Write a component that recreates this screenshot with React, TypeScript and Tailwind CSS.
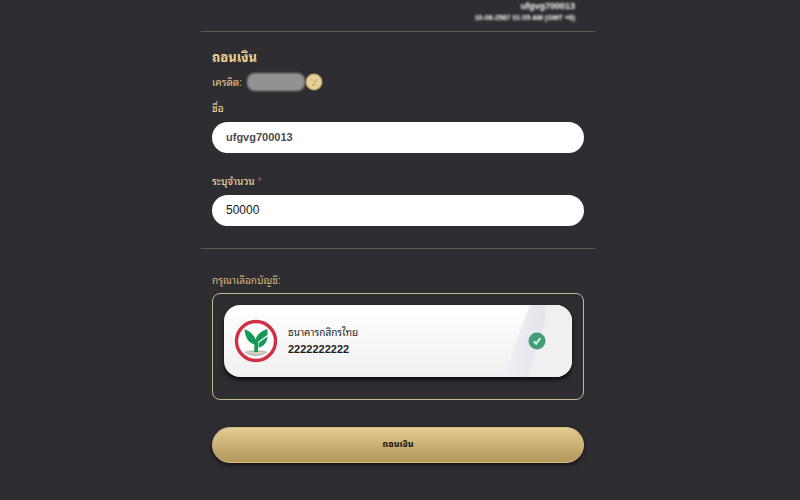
import React, { useState } from 'react';

const account = {
  bank: 'ธนาคารกสิกรไทย',
  number: '2222222222',
};

const BankLogo: React.FC = () => (
  <svg viewBox="0 0 44 44" className="h-11 w-11 shrink-0" aria-hidden="true">
    <circle cx="22" cy="22" r="19.5" fill="#fdfdfd" stroke="#cf3045" strokeWidth="3.4" />
    <path d="M10.500 33c3-1 7-1.400 11.500-1.400s8.500.4 11.500 1.400c-3 3-7 4-11.500 4S13.500 36 10.500 33z" fill="#bdb8b0" />
    <path d="M12.500 33.500h19M14.500 35.200h15" stroke="#e3dfd8" strokeWidth="0.700" />
    <path d="M20.300 33V25.500C14.500 23.500 11 18.500 10.500 10c5.500 2.500 9.500 5.500 11 10.500C23 15.500 27 12 33.500 10v5.800L24 23V33z" fill="#149a58" />
    <path d="M24.500 24l9-6.500c0 5-3 9.300-9 11.300z" fill="#149a58" />
  </svg>
);

const CheckBadge: React.FC = () => (
  <svg viewBox="0 0 18 18" className="h-[18px] w-[18px]" aria-hidden="true">
    <circle cx="9" cy="9" r="8.500" fill="#439d77" />
    <path d="M5.800 9.300l2.300 2.400 4.300-5.700" fill="none" stroke="#c9f7e0" strokeWidth="2" />
  </svg>
);

const Coin: React.FC = () => (
  <svg viewBox="0 0 18 18" className="h-[18px] w-[18px]" aria-hidden="true">
    <circle cx="9" cy="9" r="8.500" fill="#c3a76c" />
    <circle cx="9" cy="9" r="7" fill="#e6d29b" />
    <path d="M6 6.500l2 1M12.500 6L9 10M7 12l3.500-.5" stroke="#c4a766" strokeWidth="1.300" fill="none" />
  </svg>
);

const Field: React.FC<{
  id: string;
  label: string;
  value: string;
  required?: boolean;
  readOnly?: boolean;
  className: string;
  onChange?: (value: string) => void;
}> = ({ id, label, value, required, readOnly, className, onChange }) => (
  <div>
    <label htmlFor={id} className="block pb-[6px] text-[10px] leading-[14px] font-medium text-[#e9d6a4]">
      {label}
      {required && <span className="text-[#b05a50]"> *</span>}
    </label>
    <input
      id={id}
      value={value}
      readOnly={readOnly}
      onChange={(e) => onChange?.(e.target.value)}
      className={`block h-[31px] w-full rounded-full bg-white px-[14px] pb-px outline-none ${className}`}
    />
  </div>
);

const App: React.FC = () => {
  const [amount, setAmount] = useState('50000');

  return (
    <div className="min-h-screen bg-[#2d2d32] pr-1 pb-9 font-['Liberation_Sans','Noto_Sans_Thai_Looped','Loma','Noto_Sans_Thai',sans-serif]">
      <main className="mx-auto max-w-[394px]">
        {/* Masked user info */}
        <header className="flex h-8 flex-col items-end border-b border-[#605c4d] pr-5 text-white">
          <p className="text-[9px] leading-3 font-bold blur-[1px]">ufgvg700013</p>
          <p className="text-[7px] leading-3 font-bold blur-[1px]">10-06-2567 01:05 AM (GMT +6)</p>
        </header>

        <section className="border-b border-[#605c4d] px-[11px] pt-4 pb-[22px]">
          <h1 className="text-[13px] leading-5 font-bold text-[#f0d291]">ถอนเงิน</h1>
          <div className="mt-[3px] flex h-[22px] items-center">
            <span className="w-[35px] text-[10px] text-[#e6cc8b]">เครดิต:</span>
            <span className="h-[18px] w-[58px] rounded-lg bg-[#929294] blur-[1px]" />
            <Coin />
          </div>

          <form className="mt-[9px] flex flex-col gap-[22px]">
            <Field id="name" label="ชื่อ" value="ufgvg700013" readOnly className="text-[11px] font-bold text-[#4b4b4e]" />
            <Field id="amount" label="ระบุจำนวน" value={amount} required onChange={setAmount} className="text-xs text-[#161616]" />
          </form>
        </section>

        <section className="px-[11px] pt-[25px]">
          <h2 className="text-[10px] leading-[14px] text-[#d9b878]">กรุณาเลือกบัญชี:</h2>
          <div className="mt-[5px] rounded-lg border border-[#c4b88e] px-[11px] pt-[11px] pb-[22px]">
            <label className="relative flex h-[72px] items-center gap-[10px] overflow-hidden rounded-2xl bg-linear-to-b from-white to-[#f0f0f1] px-[10px] shadow-[0_3px_4px_#0c0c10]">
              {/* Card sheen */}
              <svg viewBox="0 0 80 72" className="absolute top-0 right-0 h-full w-20" aria-hidden="true">
                <defs>
                  <linearGradient id="sheen" x1="0" y1="0" x2="1" y2="0">
                    <stop offset="0" stopColor="#f0f0f4" />
                    <stop offset="1" stopColor="#e4e5ec" />
                  </linearGradient>
                </defs>
                <path d="M38 0h15v18L36 72H11z" fill="url(#sheen)" />
                <path d="M53 0h27v72H36l17-54z" fill="#f0f0f2" />
              </svg>
              <input type="radio" name="account" defaultChecked className="sr-only" />
              <BankLogo />
              <span className="relative flex-1 pb-px text-[#1d1d1f]">
                <span className="block text-[10px] leading-4">{account.bank}</span>
                <span className="block text-[11px] leading-4 font-bold">{account.number}</span>
              </span>
              <span className="relative mr-4">
                <CheckBadge />
              </span>
            </label>
          </div>

          <button
            type="button"
            className="mt-[27px] block h-9 w-full rounded-full border border-[#d3bb7c] bg-linear-to-b from-[#e3cc91] to-[#b3975c] text-[9px] font-bold text-[#17130a] shadow-[0_2px_4px_#141416]"
          >
            ถอนเงิน
          </button>
        </section>
      </main>
    </div>
  );
};

export default App;
